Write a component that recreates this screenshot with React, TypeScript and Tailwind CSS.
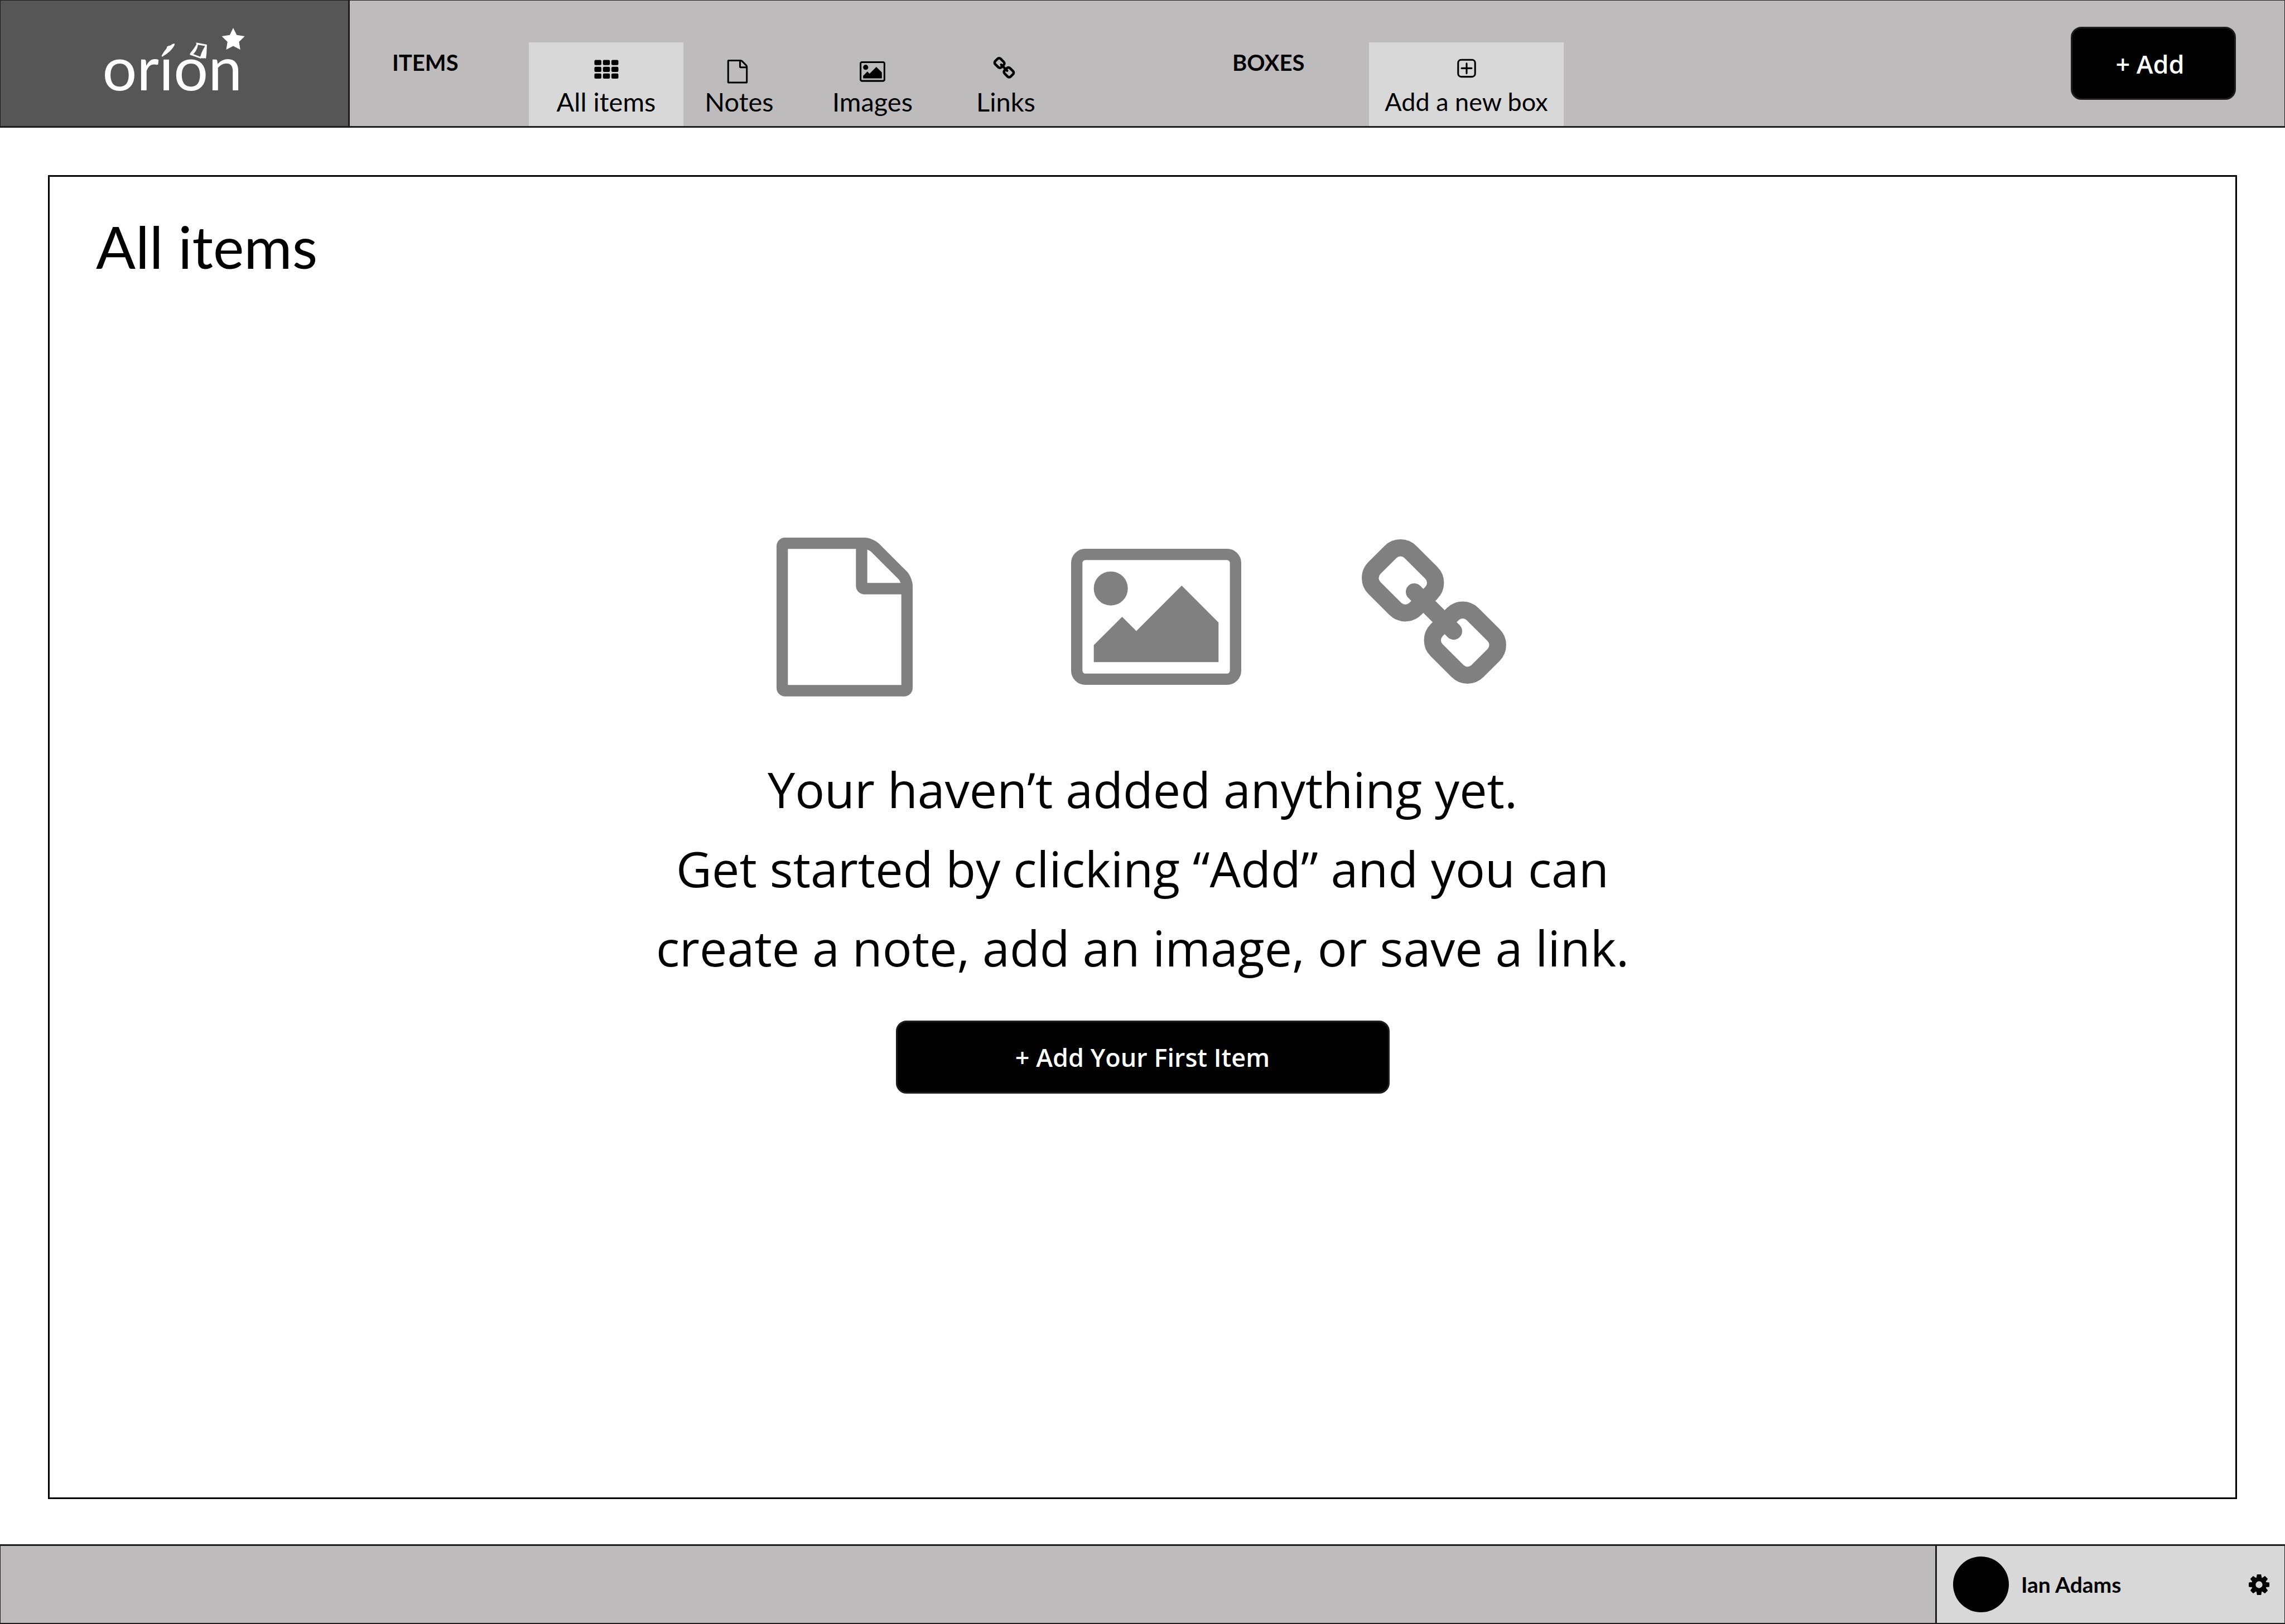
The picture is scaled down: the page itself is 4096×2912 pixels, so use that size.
import type { ReactNode } from "react";

type IconProps = { className?: string; viewBox?: string };

function GridIcon({ className }: IconProps) {
  return (
    <svg className={className} viewBox="0 0 48 48" fill="currentColor" aria-hidden="true">
      {[5.5, 17.7, 29.8].map((y) =>
        [2.5, 17.8, 33].map((x) => (
          <rect key={`${x}-${y}`} x={x} y={y} width="12.5" height="9.2" rx="2.2" />
        )),
      )}
    </svg>
  );
}

function NoteIcon({ className, viewBox = "0 0 1536 1792" }: IconProps) {
  return (
    <svg className={className} viewBox={viewBox} fill="currentColor" aria-hidden="true">
      <path d="M1468 380q28 28 48 76t20 88v1152q0 40-28 68t-68 28h-1344q-40 0-68-28t-28-68v-1600q0-40 28-68t68-28h896q40 0 88 20t76 48zm-444-244v376h376q-10-29-22-41l-313-313q-12-12-41-22zm384 1528v-1024h-416q-40 0-68-28t-28-68v-416h-768v1536h1280z" />
    </svg>
  );
}

function ImageIcon({ className, viewBox = "-64 128 1920 1536" }: IconProps) {
  return (
    <svg className={className} viewBox={viewBox} fill="currentColor" aria-hidden="true">
      <path d="M576 576q0 80-56 136t-136 56-136-56-56-136 56-136 136-56 136 56 56 136zm1024 384v448h-1408v-192l320-320 160 160 512-512zm96-704h-1600q-13 0-22.5 9.5t-9.5 22.5v1216q0 13 9.5 22.5t22.5 9.5h1600q13 0 22.5-9.5t9.5-22.5v-1216q0-13-9.5-22.5t-22.5-9.5zm160 32v1216q0 66-47 113t-113 47h-1600q-66 0-113-47t-47-113v-1216q0-66 47-113t113-47h1600q66 0 113 47t47 113z" />
    </svg>
  );
}

function LinkIcon({ className, viewBox = "0 0 380 380" }: IconProps) {
  return (
    <svg
      className={className}
      viewBox={viewBox}
      fill="none"
      stroke="currentColor"
      strokeWidth="44.6"
      strokeLinecap="round"
      aria-hidden="true"
    >
      <rect x="-76" y="-67" width="152" height="134" rx="37" transform="translate(108.2 108.2) rotate(45)" />
      <rect x="-76" y="-67" width="152" height="134" rx="37" transform="translate(271.8 271.8) rotate(45)" />
      <path d="M138.2 138.2 241.8 241.8" />
    </svg>
  );
}

function AddBoxIcon({ className }: IconProps) {
  return (
    <svg
      className={className}
      viewBox="0 0 48 48"
      fill="none"
      stroke="currentColor"
      strokeWidth="3.1"
      strokeLinecap="round"
      aria-hidden="true"
    >
      <rect x="8.8" y="5.2" width="30.4" height="30.4" rx="5.5" />
      <path d="M24 11.8v17.8M15.1 20.4h17.8" />
    </svg>
  );
}

function GearIcon({ className }: IconProps) {
  return (
    <svg className={className} viewBox="-81 -81 162 162" fill="currentColor" aria-hidden="true">
      <path
        fillRule="evenodd"
        d="M-59 0a59 59 0 1 0 118 0a59 59 0 1 0 -118 0zM-27 0a27 27 0 1 0 54 0a27 27 0 1 0 -54 0z"
      />
      {[0, 45, 90, 135, 180, 225, 270, 315].map((angle) => (
        <path key={angle} transform={`rotate(${angle})`} d="M-21 -50L-17 -78Q-16.500 -81 -13 -81H13Q16.500 -81 17 -78L21 -50z" />
      ))}
    </svg>
  );
}

function Logo() {
  return (
    <svg className="w-[273px] text-white" viewBox="0 0 1200 660" fill="currentColor" role="img" aria-label="orion">
      <text x="24" y="533" fontSize="480" fontFamily="Lato, sans-serif">
        orıon
      </text>
      <path d="M490 260C498 246 512 222 530 201L534 188Q542 180 560 178Q576 165 592 163Q596 168 590 180C572 212 534 246 503 262L499 268Z" />
      <path
        fillRule="evenodd"
        d="M763 155L848 171L845 240L841 277L836 281L826 277L818 281L808 277L800 281L786 277L714 252L715 241C732 220 752 192 765 171ZM777 172C774 200 760 228 740 246L796 267C802 240 818 206 834 182Z"
      />
      <path d="M1055 40L1083 96L1146 105L1101 149L1111 211L1055 182L1000 211L1010 149L965 105L1028 96Z" />
    </svg>
  );
}

type TabProps = { label: string; active?: boolean; className: string; children: ReactNode };

function Tab({ label, active, className, children }: TabProps) {
  return (
    <a
      href="#"
      className={`flex flex-col items-center justify-end gap-1.5 pt-[26px] pb-[18px] leading-[52px] whitespace-nowrap ${className} ${active ? "bg-[#d8d8d8]" : ""}`}
    >
      {children}
      <span>{label}</span>
    </a>
  );
}

export default function App() {
  return (
    <div className="flex min-h-screen flex-col bg-white font-['Lato',sans-serif] text-black">
      <header className="flex items-stretch border border-b-[3px] border-[#1d1d1b] bg-[#bdbbbb]">
        <a href="#" className="flex w-[626px] shrink-0 items-start justify-center border-r-[3px] border-[#1d1d1b] bg-[#565656] pt-10 pl-1">
          <Logo />
        </a>
        <nav className="flex" aria-label="Items">
          <h2 className="flex w-[321px] items-center pb-1 pl-[76px] text-[40px] leading-[48px] font-bold">ITEMS</h2>
          <div className="flex items-end">
            <Tab label="All items" active className="w-[277px] text-[47px]">
              <GridIcon className="size-12" />
            </Tab>
            <Tab label="Notes" className="w-[200px] text-[47px]">
              <NoteIcon className="size-12" viewBox="-116 -210 2020 2020" />
            </Tab>
            <Tab label="Images" className="w-[278px] text-[47px]">
              <ImageIcon className="size-12" viewBox="-110 -207 2012 2012" />
            </Tab>
            <Tab label="Links" className="w-[200px] text-[47px]">
              <LinkIcon className="size-12" viewBox="-16 0 471 471" />
            </Tab>
          </div>
        </nav>
        <nav className="flex" aria-label="Boxes">
          <h2 className="flex w-[551px] items-center pb-1 pl-[306px] text-[40px] leading-[48px] font-bold">BOXES</h2>
          <div className="flex items-end">
            <Tab label="Add a new box" active className="w-[349px] text-[45px]">
              <AddBoxIcon className="size-12" />
            </Tab>
          </div>
        </nav>
        <div className="flex grow justify-end pt-[47px] pr-[87px] pb-[47px]">
          <button
            type="button"
            className="h-[131px] w-[296px] rounded-[19px] border-[3px] border-[#1d1d1b] bg-black pt-0.5 pr-3 font-['Open_Sans',sans-serif] text-[45px] font-semibold text-white"
          >
            + Add
          </button>
        </div>
      </header>

      <main className="mx-[86px] mt-[85px] mb-[81px] flex grow flex-col border-[3px] border-black">
        <h1 className="pt-16 pl-[83px] text-[105px] leading-[120px]">All items</h1>
        <section className="mt-[463px] flex flex-col items-center font-['Open_Sans',sans-serif]">
          <div className="flex items-center pr-1 text-[#808080]">
            <NoteIcon className="w-[244px]" />
            <ImageIcon className="ml-[284px] w-[305px]" />
            <LinkIcon className="mb-5 ml-[216px] w-[259px]" />
          </div>
          <p className="mt-[95px] text-center text-[88px] leading-[142px]">
            Your haven’t added anything yet.
            <br />
            Get started by clicking “Add” and you can
            <br />
            create a note, add an image, or save a link.
          </p>
          <button
            type="button"
            className="mt-[60px] h-[131px] w-[885px] rounded-[19px] border-[3px] border-[#1d1d1b] bg-black pt-0.5 text-[45px] font-semibold text-white"
          >
            + Add Your First Item
          </button>
        </section>
      </main>

      <footer className="flex h-[143px] justify-end border border-t-[3px] border-b-2 border-[#1d1d1b] bg-[#bdbbbb]">
        <div className="flex w-[626px] items-center border-l-[3px] border-[#1d1d1b] bg-[#d8d8d8] pr-[27px] pl-[29px]">
          <span className="size-[100px] rounded-full bg-black" />
          <span className="ml-[22px] grow text-[39px] leading-[44px] font-bold">Ian Adams</span>
          <button type="button" aria-label="Settings">
            <GearIcon className="size-[37px]" />
          </button>
        </div>
      </footer>
    </div>
  );
}
